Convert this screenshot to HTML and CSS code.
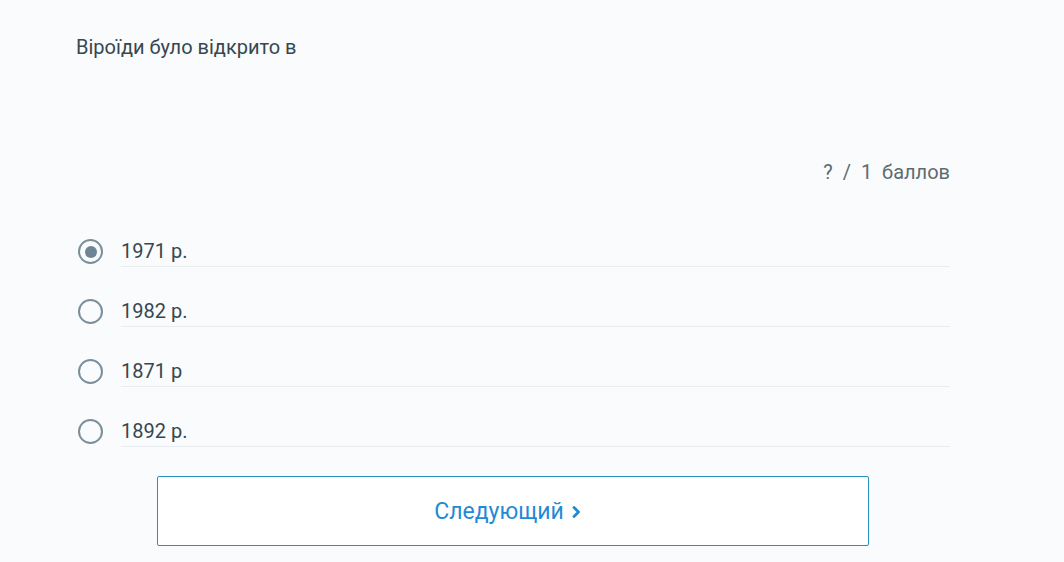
FILE: index.html
```html
<!DOCTYPE html>
<html lang="uk">
<head>
<meta charset="utf-8">
<title>Quiz</title>
<link rel="stylesheet" href="styles.css">
</head>
<body>
<main class="quiz">
  <p class="question">Віроїди було відкрито в</p>
  <div class="points">? / 1 баллов</div>
  <ul class="options">
    <li class="option"><span class="radio checked"></span><span class="label">1971 р.</span></li>
    <li class="option"><span class="radio"></span><span class="label">1982 р.</span></li>
    <li class="option"><span class="radio"></span><span class="label">1871 р</span></li>
    <li class="option"><span class="radio"></span><span class="label">1892 р.</span></li>
  </ul>
  <div class="actions">
    <button class="next" type="button">Следующий
      <svg class="chev" width="12" height="14" viewBox="0 0 12 14"><path d="M3 2.5 L7.5 7 L3 11.5" fill="none" stroke="currentColor" stroke-width="2.8" stroke-linecap="round" stroke-linejoin="round"/></svg>
    </button>
  </div>
</main>
</body>
</html>
```
FILE: styles.css
```css
html, body {
  margin: 0;
  padding: 0;
  background: #f9fbfc;
}
body {
  font-family: Roboto, "Noto Sans", "Liberation Sans", sans-serif;
  color: #37474f;
}
.quiz {
  width: 874px;
  padding: 35px 0 0 76px;
}
.question {
  margin: 0;
  font-size: 20px;
  line-height: 24px;
}
.points {
  margin-top: 101px;
  text-align: right;
  font-size: 20px;
  line-height: 24px;
  color: #5d6b74;
  word-spacing: 5px;
}
.options {
  list-style: none;
  margin: 23px 0 0;
  padding: 0;
}
.option {
  display: flex;
  align-items: flex-start;
  padding-top: 32px;
}
.radio {
  box-sizing: border-box;
  width: 25px;
  height: 25px;
  border: 2.5px solid #7b8f9b;
  border-radius: 50%;
  margin: 0 18px 0 2px;
  display: flex;
  align-items: center;
  justify-content: center;
  flex: none;
}
.radio.checked::after {
  content: "";
  width: 12px;
  height: 12px;
  border-radius: 50%;
  background: #6e8595;
}
.label {
  flex: 1;
  font-size: 20px;
  line-height: 24px;
  padding-bottom: 3px;
  border-bottom: 1px solid #e9edf0;
}
.actions {
  display: flex;
  justify-content: center;
  margin-top: 29px;
}
.next {
  width: 712px;
  height: 70px;
  box-sizing: border-box;
  background: #ffffff;
  border: 1px solid #2291bd;
  border-radius: 2px;
  color: #1f8ad6;
  font-family: Roboto, "Noto Sans", "Liberation Sans", sans-serif;
  font-size: 23px;
  display: flex;
  align-items: center;
  justify-content: center;
  gap: 7px;
  padding: 0 9px 0 0;
}
.chev {
  margin-top: 2px;
}
```
